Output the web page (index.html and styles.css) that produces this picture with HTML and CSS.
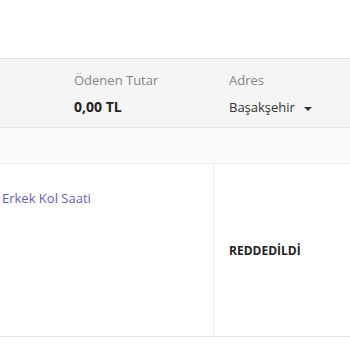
FILE: index.html
```html
<!DOCTYPE html>
<html lang="tr">
<head>
    <meta charset="UTF-8">
    <meta name="viewport" content="width=device-width, initial-scale=1.0">
    <title>Sipariş Detayı</title>
    <link rel="stylesheet" href="styles.css">
</head>
<body>
    <div class="top"></div>

    <div class="summary">
        <div class="summary-item">
            <div class="label">Ödenen Tutar</div>
            <div class="value bold">0,00 TL</div>
        </div>
        <div class="summary-item last">
            <div class="label">Adres</div>
            <div class="value">Başakşehir <span class="caret"></span></div>
        </div>
    </div>

    <div class="subbar"></div>

    <div class="order-row">
        <div class="cell product">
            <a class="product-link" href="#">Erkek Kol Saati</a>
        </div>
        <div class="cell status">REDDEDİLDİ</div>
    </div>
</body>
</html>
```

FILE: styles.css
```css
body {
    margin: 0;
    font-family: "Open Sans", Arial, sans-serif;
    background-color: #fff;
    color: #222;
}
.top {
    height: 58px;
    border-bottom: 1px solid #e3e3e3;
}
.summary {
    display: flex;
    height: 68px;
    padding-left: 74px;
    background-color: #f5f5f5;
    border-bottom: 1px solid #e6e6e6;
}
.summary-item {
    flex: 0 0 155px;
    padding-top: 11px;
}
.summary-item.last {
    flex: 1;
}
.label {
    font-size: 13px;
    color: #858585;
    line-height: 20px;
}
.value {
    font-size: 13px;
    color: #333;
    line-height: 20px;
    margin-top: 7px;
}
.bold {
    font-size: 14px;
    font-weight: 700;
    color: #222;
}
.caret {
    display: inline-block;
    width: 0;
    height: 0;
    margin-left: 6px;
    vertical-align: middle;
    border-left: 4px solid transparent;
    border-right: 4px solid transparent;
    border-top: 4px solid #333;
}
.subbar {
    height: 35px;
    background-color: #fafafa;
    border-bottom: 1px solid #ececec;
}
.order-row {
    display: flex;
    height: 172px;
    border-bottom: 1px solid #e3e3e3;
}
.cell {
    box-sizing: border-box;
}
.product {
    width: 214px;
    padding: 22px 0 0 2px;
    border-right: 1px solid #ededed;
}
.product-link {
    font-size: 13px;
    line-height: 20px;
    color: #6a5cb0;
    text-decoration: none;
}
.status {
    flex: 1;
    display: flex;
    align-items: center;
    padding-left: 15px;
    font-size: 12px;
    font-weight: 700;
    color: #222;
}
```
